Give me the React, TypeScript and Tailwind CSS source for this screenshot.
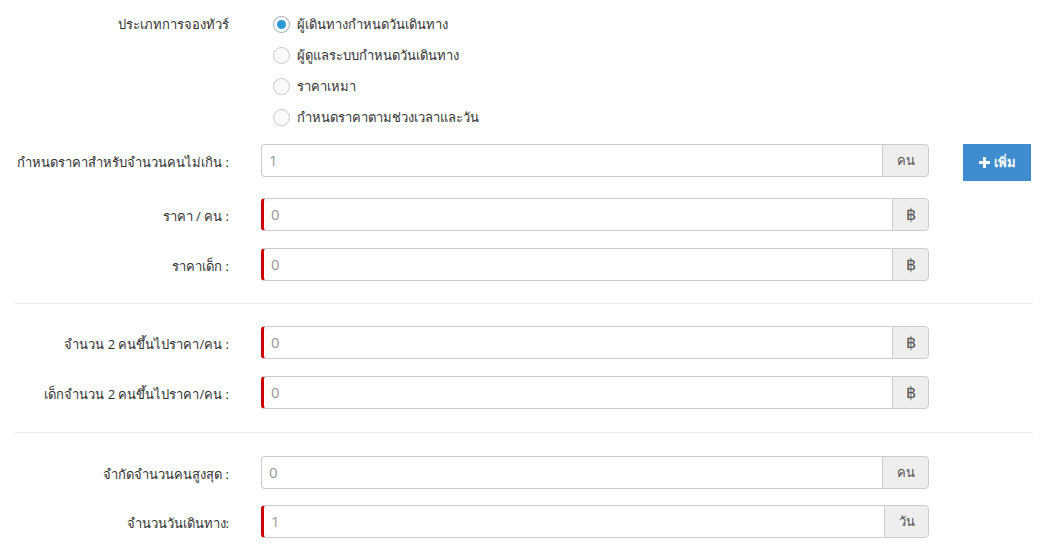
import React from 'react';

const font = { fontFamily: '"Open Sans", "Noto Sans", Tahoma, sans-serif' };

interface FieldProps {
  label: string;
  value: string;
  addon: string;
  addonWidth: string;
  required?: boolean;
  children?: React.ReactNode;
}

const Field: React.FC<FieldProps> = ({ label, value, addon, addonWidth, required, children }) => (
  <div className="flex items-center h-[33px]">
    <label className="w-[229px] text-right whitespace-nowrap text-[13px] text-[#333] pt-[4px]">{label}</label>
    <div className="ml-[32px] w-[668px] h-[33px] flex">
      <div
        className={`flex-1 flex items-center border border-[#ccc] border-r-0 rounded-l-[4px] pl-[7px] text-[15px] text-[#999] ${
          required ? 'border-l-[3px] border-l-[#c00] pl-[5px]' : ''
        }`}
      >
        {value}
      </div>
      <div
        className={`${addonWidth} flex items-center justify-center bg-[#eee] border border-[#ccc] rounded-r-[4px] text-[#555] ${
          addon === '฿' ? 'text-[16px] font-[Liberation_Sans,sans-serif]' : 'text-[13px]'
        }`}
      >
        {addon}
      </div>
    </div>
    {children}
  </div>
);

const Radio: React.FC<{ label: string; checked?: boolean }> = ({ label, checked }) => (
  <div className="flex items-center h-[31px]">
    <span
      className={`w-[17px] h-[17px] rounded-full border flex items-center justify-center ${
        checked ? 'border-[#9ab]' : 'border-[#c8c8c8] bg-[#fafafa]'
      }`}
    >
      {checked && <span className="w-[9px] h-[9px] rounded-full bg-[#2d9ad8]" />}
    </span>
    <span className="ml-[7px] text-[13px] text-[#333]">{label}</span>
  </div>
);

export default function App() {
  return (
    <div className="bg-white w-[1043px] h-[554px] overflow-hidden" style={font}>
      <div className="pt-[9px] flex">
        <label className="w-[229px] text-right text-[13px] text-[#333] pt-[6px]">ประเภทการจองทัวร์</label>
        <div className="ml-[44px]">
          <Radio label="ผู้เดินทางกำหนดวันเดินทาง" checked />
          <Radio label="ผู้ดูแลระบบกำหนดวันเดินทาง" />
          <Radio label="ราคาเหมา" />
          <Radio label="กำหนดราคาตามช่วงเวลาและวัน" />
        </div>
      </div>

      <div className="mt-[11px]">
        <Field label="กำหนดราคาสำหรับจำนวนคนไม่เกิน :" value="1" addon="คน" addonWidth="w-[47px]">
          <button className="ml-[34px] w-[68px] h-[37px] mt-[4px] bg-[#3f8dcf] text-white text-[13px] font-bold flex items-center justify-center gap-[4px]">
            <svg width="11" height="11" viewBox="0 0 11 11">
              <path d="M4 0h3v4h4v3H7v4H4V7H0V4h4z" fill="white" />
            </svg>
            เพิ่ม
          </button>
        </Field>
      </div>
      <div className="mt-[21px] flex flex-col gap-[17px]">
        <Field label="ราคา / คน :" value="0" addon="฿" addonWidth="w-[37px]" required />
        <Field label="ราคาเด็ก :" value="0" addon="฿" addonWidth="w-[37px]" required />
      </div>

      <hr className="mx-[14px] w-[1019px] mt-[22px] border-0 border-t border-[#eee]" />

      <div className="mt-[22px] flex flex-col gap-[17px]">
        <Field label="จำนวน 2 คนขึ้นไปราคา/คน :" value="0" addon="฿" addonWidth="w-[37px]" required />
        <Field label="เด็กจำนวน 2 คนขึ้นไปราคา/คน :" value="0" addon="฿" addonWidth="w-[37px]" required />
      </div>

      <hr className="mx-[14px] w-[1019px] mt-[23px] border-0 border-t border-[#eee]" />

      <div className="mt-[23px] flex flex-col gap-[16px]">
        <Field label="จำกัดจำนวนคนสูงสุด :" value="0" addon="คน" addonWidth="w-[47px]" />
        <Field label="จำนวนวันเดินทาง:" value="1" addon="วัน" addonWidth="w-[45px]" required />
      </div>
    </div>
  );
}
